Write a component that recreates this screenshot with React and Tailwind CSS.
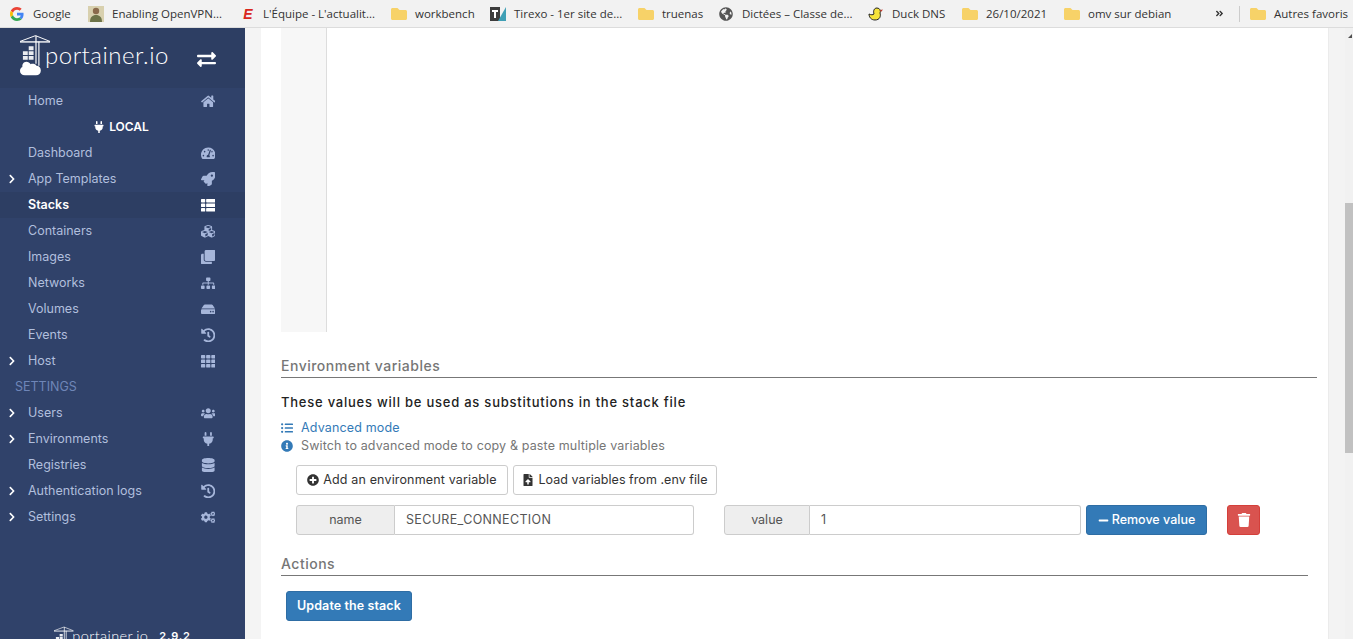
import React from "react";
import {
  FaAngleDoubleRight,
  FaChevronRight,
  FaClone,
  FaCogs,
  FaCubes,
  FaDatabase,
  FaExchangeAlt,
  FaFileUpload,
  FaFolder,
  FaGlobeAmericas,
  FaHdd,
  FaHistory,
  FaHome,
  FaInfoCircle,
  FaListUl,
  FaMinus,
  FaPlug,
  FaPlusCircle,
  FaRocket,
  FaSitemap,
  FaTachometerAlt,
  FaTh,
  FaThList,
  FaTrash,
  FaUsers,
} from "react-icons/fa";

const Folder = () => <FaFolder className="text-[#f7d268] text-[16px] shrink-0" />;

const GoogleIcon = () => (
  <svg viewBox="0 0 48 48" className="w-[14px] h-[14px] shrink-0">
    <path fill="#EA4335" d="M24 9.500c3.500 0 6.700 1.300 9.100 3.500l6.800-6.800C35.800 2.400 30.300 0 24 0 14.600 0 6.500 5.400 2.600 13.200l7.900 6.100C12.400 13.700 17.700 9.500 24 9.500z" />
    <path fill="#4285F4" d="M46.500 24.500c0-1.600-.1-3.100-.4-4.500H24v9h12.700c-.6 3-2.200 5.400-4.700 7.100l7.600 5.900c4.400-4.100 6.900-10.100 6.900-17.500z" />
    <path fill="#FBBC05" d="M10.500 28.700c-.5-1.500-.8-3-.8-4.700s.3-3.200.8-4.700l-7.900-6.100C.9 16.500 0 20.100 0 24s.9 7.500 2.600 10.800l7.900-6.100z" />
    <path fill="#34A853" d="M24 48c6.500 0 11.900-2.100 15.900-5.900L32 36.100c-2.100 1.500-4.900 2.400-8 2.400-6.300 0-11.600-4.200-13.500-9.800l-7.900 6.100C6.500 42.600 14.600 48 24 48z" />
  </svg>
);

const AvatarIcon = () => (
  <svg viewBox="0 0 16 16" className="w-[16px] h-[16px] shrink-0">
    <rect width="16" height="16" fill="#d8d0ae" />
    <circle cx="8" cy="5" r="3.200" fill="#8a6a4c" />
    <path d="M2 16c0-5 2.500-7 6-7s6 2 6 7z" fill="#6d7348" />
  </svg>
);

const EquipeIcon = () => (
  <span className="w-[16px] shrink-0 text-center text-[14px] leading-none font-bold italic text-[#d9281e] font-['Liberation_Sans',sans-serif]">
    E
  </span>
);

const TirexoIcon = () => (
  <svg viewBox="0 0 16 14" className="w-[16px] h-[14px] shrink-0">
    <rect width="10" height="14" fill="#3d3d3d" />
    <path d="M8 14L16 0v14z" fill="#3f9fb5" />
    <path d="M2 3h6v2H6v6H4V5H2z" fill="#fff" />
  </svg>
);

const GlobeIcon = () => <FaGlobeAmericas className="text-[#555] text-[14px] shrink-0" />;

const DuckIcon = () => (
  <svg viewBox="0 0 16 16" className="w-[16px] h-[16px] shrink-0">
    <path d="M1 8c2 1 4 1 5 0-1-3 0-6 3-6s4 3 3 5c1 3 0 7-5 7-4 0-6-3-6-6z" fill="#f5e33a" stroke="#222" strokeWidth="1" />
    <path d="M12 4l3-.5-2 2.500z" fill="#c0392b" />
  </svg>
);

const bookmarks = [
  { label: "Google", icon: <GoogleIcon />, width: "w-[78px]", gap: "gap-[9px]" },
  { label: "Enabling OpenVPN...", icon: <AvatarIcon />, width: "w-[152px]", gap: "gap-[8px]" },
  { label: "L'Équipe - L'actualit...", icon: <EquipeIcon />, width: "w-[151px]", gap: "gap-[7px]" },
  { label: "workbench", icon: <Folder />, width: "w-[99px]", gap: "gap-[8px]" },
  { label: "Tirexo - 1er site de...", icon: <TirexoIcon />, width: "w-[148px]", gap: "gap-[8px]" },
  { label: "truenas", icon: <Folder />, width: "w-[81px]", gap: "gap-[8px]" },
  { label: "Dictées – Classe de...", icon: <GlobeIcon />, width: "w-[149px]", gap: "gap-[9px]" },
  { label: "Duck DNS", icon: <DuckIcon />, width: "w-[94px]", gap: "gap-[8px]" },
  { label: "26/10/2021", icon: <Folder />, width: "w-[102px]", gap: "gap-[8px]" },
  { label: "omv sur debian", icon: <Folder />, width: "w-[156px]", gap: "gap-[8px]" },
];

const navItems = [
  { label: "Home", icon: FaHome },
  { type: "env", label: "LOCAL" },
  { label: "Dashboard", icon: FaTachometerAlt },
  { label: "App Templates", icon: FaRocket, arrow: true },
  { label: "Stacks", icon: FaThList, active: true },
  { label: "Containers", icon: FaCubes },
  { label: "Images", icon: FaClone },
  { label: "Networks", icon: FaSitemap },
  { label: "Volumes", icon: FaHdd },
  { label: "Events", icon: FaHistory },
  { label: "Host", icon: FaTh, arrow: true },
  { type: "title", label: "SETTINGS" },
  { label: "Users", icon: FaUsers, arrow: true },
  { label: "Environments", icon: FaPlug, arrow: true },
  { label: "Registries", icon: FaDatabase },
  { label: "Authentication logs", icon: FaHistory, arrow: true },
  { label: "Settings", icon: FaCogs, arrow: true },
];

// crane and cloud from the portainer logo
const Crane = ({ className }) => (
  <svg viewBox="0 0 32 42" className={className} fill="none">
    <path d="M0 7L16 1l15 6" stroke="#fff" strokeWidth="1" />
    <path d="M0 7.500h31" stroke="#fff" strokeWidth="1.400" />
    <path d="M16.500 1v29M19.500 7v25" stroke="#fff" strokeWidth="1.200" />
    <path d="M9 12h5v4H9zM3 17h5v4H3zM9 17h5v4H9zM3 22h5v4H3zM9 22h5v4H9z" fill="#fff" opacity=".9" />
    <path d="M5 42c-3 0-5-2-5-4.500 0-2 1-3.500 2.500-4-.5-2.500 1-5.500 4-5.500 2 0 3.500 1 4.500 2.500 1.500-1 5-.5 6 1.500 2.500 0 4.500 2 4.500 5s-2 5-5 5z" fill="#fff" />
  </svg>
);

const NavRow = ({ item }) => {
  if (item.type === "env") {
    return (
      <div className="h-[26px] flex items-center justify-center gap-[4px] pr-[3px] text-white text-[12px] font-semibold">
        <FaPlug className="text-[12px]" />
        {item.label}
      </div>
    );
  }
  if (item.type === "title") {
    return (
      <div className="h-[26px] flex items-center pl-[15px] text-[12.500px] text-[#6f86b8]">{item.label}</div>
    );
  }
  const Icon = item.icon;
  return (
    <div
      className={`h-[26px] flex items-center text-[12.500px] ${
        item.active ? "bg-[#2d3e63] text-white font-semibold" : "text-[#b1bfdd]"
      }`}
    >
      <span className="w-[28px] pl-[7px] shrink-0 text-white text-[10px]">
        {item.arrow && <FaChevronRight />}
      </span>
      <span className="flex-1">{item.label}</span>
      <span className={`w-[18px] mr-[28px] flex justify-center text-[14.500px] ${item.active ? "text-white" : "text-[#a6b6da]"}`}>
        <Icon />
      </span>
    </div>
  );
};

const Sidebar = () => (
  <aside className="w-[245px] shrink-0 bg-[#30426a] font-['Inter',sans-serif] flex flex-col">
    <div className="h-[60px] shrink-0 bg-[#2d3e63] flex items-start pl-[20px] pt-[6px]">
      <Crane className="w-[31px] h-[42px] shrink-0" />
      <span className="ml-[-6px] mt-[6px] w-[130px] text-white text-[24px] leading-[30px] font-light font-['Lato',sans-serif] tracking-[0.5px]">
        portainer.io
      </span>
      <FaExchangeAlt className="ml-[22px] mt-[16px] text-white text-[19px]" />
    </div>
    <nav>
      {navItems.map((item) => (
        <NavRow key={item.label} item={item} />
      ))}
    </nav>
    <div className="mt-[96px] flex items-start justify-center gap-[5px] shrink-0">
      <Crane className="w-[20px] h-[27px] shrink-0" />
      <span className="ml-[-7px] text-white text-[14.500px] leading-[20px] font-light font-['Lato',sans-serif] tracking-[0.4px]">portainer.io</span>
      <span className="ml-[6px] text-white text-[11px] leading-[20px] font-semibold tracking-[0.8px]">2.9.2</span>
    </div>
  </aside>
);

const SectionTitle = ({ children, lineWidth }) => (
  <div className={`${lineWidth} h-[24px] border-b border-[#777] text-[#767676] text-[14px] leading-[24px] font-medium tracking-[0.5px]`}>
    {children}
  </div>
);

const OutlineButton = ({ icon, children, width, tracking }) => (
  <button className={`${width} ${tracking} h-[30px] flex items-center justify-center gap-[4px] bg-white border border-[#ccc] rounded-[3px] text-[12.500px] text-[#333]`}>
    {icon}
    {children}
  </button>
);

const InputPair = ({ label, value, addonWidth, inputWidth }) => (
  <div className="flex h-[30px] text-[12.500px] text-[#555]">
    <div className={`${addonWidth} flex items-center justify-center bg-[#eee] border border-[#ccc] rounded-l-[3px]`}>{label}</div>
    <div className={`${inputWidth} flex items-center pl-[11px] bg-white border border-l-0 border-[#ccc] rounded-r-[3px] tracking-[0.35px]`}>{value}</div>
  </div>
);

const StackForm = () => (
  <div className="font-['Inter',sans-serif]">
    <div className="h-[304px] w-[46px] bg-[#f7f7f7] border-r border-[#ddd]" />
    <div className="mt-[22px]">
      <SectionTitle lineWidth="w-[1036px]">Environment variables</SectionTitle>
    </div>
    <p className="mt-[15px] text-[13px] leading-[18px] font-medium text-[#222] tracking-[0.77px]">
      These values will be used as substitutions in the stack file
    </p>
    <div className="mt-[8px] flex items-center h-[18px] text-[12.500px] text-[#337ab7] tracking-[0.15px]">
      <FaListUl className="w-[20px] pr-[8px] text-[12px]" />
      Advanced mode
    </div>
    <div className="flex items-center h-[18px] text-[12.500px] text-[#767676] tracking-[0.14px]">
      <FaInfoCircle className="w-[20px] pr-[8px] text-[12px] text-[#337ab7]" />
      Switch to advanced mode to copy &amp; paste multiple variables
    </div>
    <div className="mt-[10px] ml-[15px] flex gap-[5px]">
      <OutlineButton width="w-[212px]" tracking="tracking-[0.15px]" icon={<FaPlusCircle className="text-[12px]" />}>
        Add an environment variable
      </OutlineButton>
      <OutlineButton width="w-[204px]" tracking="tracking-[0.05px]" icon={<FaFileUpload className="text-[12px]" />}>
        Load variables from .env file
      </OutlineButton>
    </div>
    <div className="mt-[10px] ml-[15px] flex">
      <InputPair label="name" value="SECURE_CONNECTION" addonWidth="w-[99px]" inputWidth="w-[299px]" />
      <div className="ml-[30px]">
        <InputPair label="value" value="1" addonWidth="w-[86px]" inputWidth="w-[271px]" />
      </div>
      <button className="ml-[5px] w-[121px] h-[30px] flex items-center justify-center gap-[3px] bg-[#337ab7] border border-[#2e6da4] rounded-[3px] text-white text-[12.500px] font-medium">
        <FaMinus className="text-[11px]" />
        Remove value
      </button>
      <button className="ml-[20px] w-[33px] h-[30px] flex items-center justify-center bg-[#d9534f] border border-[#d43f3a] rounded-[3px] text-white text-[14px]">
        <FaTrash />
      </button>
    </div>
    <div className="mt-[17px]">
      <SectionTitle lineWidth="w-[1027px]">Actions</SectionTitle>
    </div>
    <button className="mt-[15px] ml-[5px] w-[126px] h-[30px] flex items-center justify-center bg-[#337ab7] border border-[#2e6da4] rounded-[3px] text-white text-[12.500px] font-semibold tracking-[0.1px]">
      Update the stack
    </button>
  </div>
);

const App = () => (
  <div className="h-[639px] w-[1353px] overflow-hidden flex flex-col bg-white">
    <header className="h-[28px] shrink-0 bg-[#f2f2f2] border-b border-[#dcdcdc] flex items-center pl-[10px] text-[11.500px] text-[#333] font-['Open_Sans',sans-serif]">
      {bookmarks.map((b) => (
        <div key={b.label} className={`${b.width} flex items-center ${b.gap} shrink-0 whitespace-nowrap`}>
          {b.icon}
          <span>{b.label}</span>
        </div>
      ))}
      <FaAngleDoubleRight className="ml-[-5px] text-[9px] text-[#333]" />
      <div className="ml-[15px] w-px h-[16px] bg-[#ccc]" />
      <div className="ml-[10px] flex items-center gap-[8px] whitespace-nowrap">
        <Folder />
        <span>Autres favoris</span>
      </div>
    </header>
    <div className="flex-1 min-h-0 flex">
      <Sidebar />
      <div className="w-[16px] shrink-0 bg-[#f4f4f4]" />
      <main className="w-[1067px] shrink-0 pl-[20px] bg-white">
        <StackForm />
      </main>
      <div className="w-[17px] shrink-0 bg-[#f3f3f3] border-l border-[#ebebeb]" />
      <div className="w-[8px] shrink-0 bg-[#f1f1f1] flex flex-col">
        <div className="mt-[6px] ml-[3px] w-0 h-0 border-l-[4px] border-r-0 border-b-[4px] border-l-transparent border-b-[#505050]" />
        <div className="mt-[165px] h-[250px] bg-[#c1c1c1]" />
      </div>
    </div>
  </div>
);

export default App;
